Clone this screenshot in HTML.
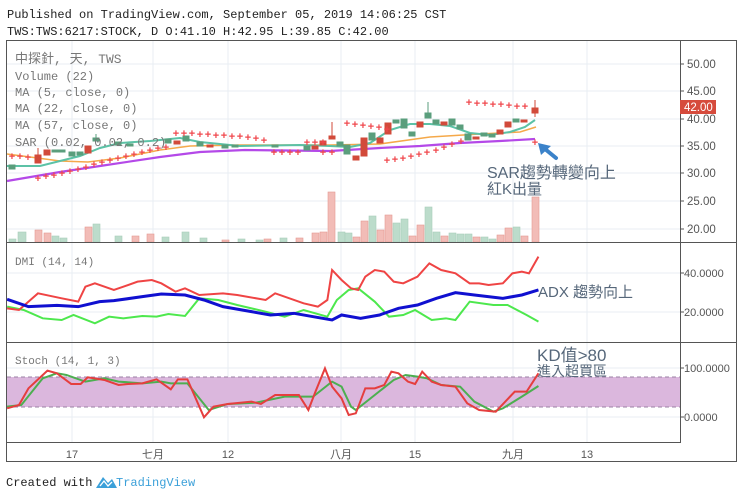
<!DOCTYPE html>
<html><head><meta charset="utf-8"><style>
html,body{margin:0;padding:0;background:#fff;width:740px;height:497px;overflow:hidden}
svg{display:block}
.m{font-family:"Liberation Mono","Noto Sans CJK TC",monospace}
.s{font-family:"Liberation Sans","Noto Sans CJK TC",sans-serif}
</style></head><body>
<svg width="740" height="497" viewBox="0 0 740 497" xmlns="http://www.w3.org/2000/svg">
<text class="m" x="7" y="18" font-size="12" fill="#222">Published on TradingView.com, September 05, 2019 14:06:25 CST</text>
<text class="m" x="7" y="35" font-size="12" fill="#222">TWS:TWS:6217:STOCK, D O:41.10 H:42.95 L:39.85 C:42.00</text>

<g stroke="#e9eef3" stroke-width="1">
<line x1="72" y1="41" x2="72" y2="442"/><line x1="153" y1="41" x2="153" y2="442"/><line x1="228" y1="41" x2="228" y2="442"/><line x1="341" y1="41" x2="341" y2="442"/><line x1="415" y1="41" x2="415" y2="442"/><line x1="513" y1="41" x2="513" y2="442"/><line x1="587" y1="41" x2="587" y2="442"/>
<line x1="7" y1="64" x2="680" y2="64"/><line x1="7" y1="91" x2="680" y2="91"/><line x1="7" y1="119" x2="680" y2="119"/><line x1="7" y1="146" x2="680" y2="146"/><line x1="7" y1="173" x2="680" y2="173"/><line x1="7" y1="201" x2="680" y2="201"/><line x1="7" y1="229" x2="680" y2="229"/>
<line x1="7" y1="273" x2="680" y2="273"/><line x1="7" y1="312" x2="680" y2="312"/>
<line x1="7" y1="368" x2="680" y2="368"/><line x1="7" y1="417" x2="680" y2="417"/>
</g>

<g fill="#bcdccb" stroke="#a9cdb9" stroke-width="0.6">
<rect x="9" y="239" width="7" height="3"/><rect x="18" y="232" width="8" height="10"/><rect x="52" y="236" width="7" height="6"/><rect x="60" y="238" width="7" height="4"/><rect x="93" y="224" width="7" height="18"/><rect x="115" y="236" width="7" height="6"/><rect x="162" y="237" width="7" height="5"/><rect x="182" y="232" width="7" height="10"/><rect x="200" y="238" width="7" height="4"/>
<rect x="238" y="239" width="7" height="3"/><rect x="256" y="240" width="7" height="2"/><rect x="280" y="238" width="7" height="4"/>
<rect x="338" y="232" width="7" height="10"/><rect x="345" y="233" width="7" height="9"/><rect x="369" y="216" width="7" height="26"/><rect x="393" y="223" width="7" height="19"/><rect x="401" y="219" width="7" height="23"/><rect x="425" y="207" width="7" height="35"/><rect x="433" y="232" width="7" height="10"/><rect x="449" y="233" width="7" height="9"/><rect x="457" y="234" width="7" height="8"/><rect x="465" y="234" width="7" height="8"/><rect x="481" y="237" width="7" height="5"/><rect x="489" y="239" width="7" height="3"/><rect x="513" y="227" width="7" height="15"/>
</g>
<g fill="#f2bcb7" stroke="#e49a93" stroke-width="0.6">
<rect x="35" y="230" width="7" height="12"/><rect x="44" y="233" width="7" height="9"/><rect x="85" y="227" width="7" height="15"/><rect x="132" y="236" width="7" height="6"/><rect x="147" y="234" width="7" height="8"/><rect x="222" y="240" width="7" height="2"/>
<rect x="264" y="239" width="7" height="3"/><rect x="296" y="238" width="7" height="4"/>
<rect x="312" y="233" width="7" height="9"/><rect x="320" y="232" width="7" height="10"/><rect x="328" y="192" width="7" height="50"/><rect x="353" y="237" width="7" height="5"/><rect x="361" y="221" width="7" height="21"/><rect x="377" y="230" width="7" height="12"/><rect x="385" y="215" width="7" height="27"/><rect x="409" y="236" width="7" height="6"/><rect x="417" y="225" width="7" height="17"/><rect x="441" y="236" width="7" height="6"/><rect x="473" y="237" width="7" height="5"/><rect x="497" y="235" width="7" height="7"/><rect x="505" y="228" width="7" height="14"/><rect x="521" y="236" width="7" height="6"/><rect x="532" y="197" width="7" height="45"/>
</g>

<polyline fill="none" stroke="#b449e8" stroke-width="2.2" points="7,181 60,172 100,166 160,157 200,152 245,150 330,151 380,148 420,146 460,143 500,141 535,139"/>
<polyline fill="none" stroke="#f5a94a" stroke-width="1.6" points="7,154 30,157 60,161 88,162 120,158 160,150 190,146 240,145 330,145 380,144 430,137 480,134 520,132 536,127"/>
<polyline fill="none" stroke="#5cc2a6" stroke-width="2" points="7,166 40,166 80,156 100,148 120,143 150,141 180,138 200,142 240,146 300,145 330,146 350,147 370,143 390,130 410,124 430,124 450,126 470,133 490,135 510,132 525,127 535,120"/>

<g stroke-width="1">
<g fill="#5a9e7c" stroke="#5a9e7c">
<rect x="9" y="165" width="6" height="4"/><rect x="52" y="150" width="6" height="2"/><rect x="59" y="150" width="6" height="2"/><rect x="69" y="152" width="6" height="4"/><rect x="77" y="152" width="6" height="3"/><line x1="96" y1="134" x2="96" y2="141"/><rect x="93" y="138" width="6" height="3"/><rect x="115" y="142" width="6" height="3"/><rect x="127" y="144" width="6" height="2"/><rect x="165" y="139" width="6" height="4"/><rect x="183" y="136" width="6" height="5"/><rect x="197" y="142" width="6" height="4"/><rect x="222" y="145" width="6" height="3"/><rect x="232" y="145" width="6" height="2"/><rect x="272" y="145" width="6" height="2"/>
<rect x="304" y="146" width="6" height="4"/><rect x="337" y="142" width="6" height="4"/><rect x="344" y="145" width="6" height="9"/><rect x="369" y="133" width="6" height="7"/><rect x="393" y="120" width="6" height="3"/><rect x="401" y="119" width="6" height="9"/><rect x="409" y="132" width="6" height="4"/><line x1="428" y1="102" x2="428" y2="118"/><rect x="425" y="113" width="6" height="5"/><rect x="433" y="120" width="6" height="4"/><rect x="449" y="119" width="6" height="6"/><rect x="457" y="125" width="6" height="4"/><rect x="465" y="134" width="6" height="6"/><rect x="481" y="133" width="6" height="3"/><rect x="489" y="134" width="6" height="3"/><rect x="513" y="119" width="6" height="3"/>
</g>
<g fill="#d24a3a" stroke="#d24a3a">
<line x1="38" y1="148" x2="38" y2="163"/><rect x="35" y="155" width="6" height="8"/><rect x="44" y="150" width="6" height="5"/><rect x="85" y="146" width="6" height="7"/><rect x="174" y="141" width="6" height="3"/><rect x="207" y="145" width="6" height="2"/>
<rect x="312" y="146" width="6" height="3"/><rect x="320" y="141" width="6" height="4"/><line x1="332" y1="122" x2="332" y2="139"/><rect x="329" y="136" width="6" height="3"/><rect x="353" y="156" width="6" height="4"/><rect x="361" y="138" width="6" height="18"/><rect x="377" y="138" width="6" height="5"/><rect x="385" y="123" width="6" height="11"/><rect x="417" y="122" width="6" height="5"/><rect x="441" y="122" width="6" height="3"/><rect x="473" y="137" width="6" height="2"/><rect x="497" y="130" width="6" height="4"/><rect x="505" y="122" width="6" height="5"/><rect x="521" y="120" width="6" height="2"/><line x1="535" y1="100" x2="535" y2="117"/><rect x="532" y="108" width="6" height="5"/>
</g>
</g>

<g fill="#f0474c" font-family="Liberation Sans" font-size="11" font-weight="bold" text-anchor="middle">
<text x="12" y="160">+</text><text x="20" y="160">+</text><text x="28" y="161">+</text>
<text x="38" y="182">+</text><text x="46" y="180">+</text><text x="54" y="179">+</text><text x="62" y="177">+</text><text x="70" y="175">+</text><text x="78" y="173">+</text><text x="86" y="171">+</text><text x="94" y="168">+</text><text x="102" y="166">+</text><text x="110" y="164">+</text><text x="118" y="162">+</text><text x="126" y="160">+</text><text x="134" y="158">+</text><text x="142" y="156">+</text><text x="150" y="154">+</text><text x="158" y="152">+</text><text x="166" y="151">+</text>
<text x="176" y="137">+</text><text x="184" y="137">+</text><text x="192" y="137">+</text><text x="200" y="138">+</text><text x="208" y="138">+</text><text x="216" y="139">+</text><text x="224" y="139">+</text><text x="232" y="140">+</text><text x="240" y="140">+</text><text x="248" y="141">+</text><text x="256" y="142">+</text><text x="264" y="144">+</text>
<text x="274" y="156">+</text><text x="282" y="156">+</text><text x="290" y="156">+</text><text x="298" y="156">+</text>
<text x="307" y="146">+</text><text x="315" y="146">+</text><text x="323" y="146">+</text>
<text x="323" y="156">+</text><text x="332" y="156">+</text>
<text x="347" y="127">+</text><text x="355" y="128">+</text><text x="363" y="129">+</text><text x="371" y="130">+</text><text x="379" y="131">+</text><text x="387" y="133">+</text>
<text x="387" y="164">+</text><text x="395" y="163">+</text><text x="403" y="162">+</text><text x="411" y="160">+</text><text x="419" y="158">+</text><text x="427" y="156">+</text><text x="436" y="154">+</text><text x="444" y="151">+</text><text x="452" y="148">+</text><text x="461" y="145">+</text>
<text x="469" y="106">+</text><text x="477" y="107">+</text><text x="485" y="107">+</text><text x="493" y="108">+</text><text x="501" y="108">+</text><text x="509" y="109">+</text><text x="517" y="110">+</text><text x="525" y="110">+</text>
<text x="535" y="146">+</text>
</g>

<g class="m" fill="#777" font-size="12">
<text x="15" y="63" font-size="13">中探針, 天, TWS</text>
<text x="15" y="80">Volume (22)</text>
<text x="15" y="96">MA (5, close, 0)</text>
<text x="15" y="112">MA (22, close, 0)</text>
<text x="15" y="129">MA (57, close, 0)</text>
<text x="15" y="146">SAR (0.02, 0.02, 0.2)</text>
<text x="15" y="265" font-size="11">DMI (14, 14)</text>
<text x="15" y="364" font-size="11">Stoch (14, 1, 3)</text>
</g>

<text class="s" x="487" y="178" font-size="16" fill="#56677a">SAR趨勢轉變向上</text>
<text class="s" x="487" y="194" font-size="15" fill="#56677a">紅K出量</text>
<path d="M556,158 L545,149" stroke="#3b82c9" stroke-width="4" stroke-linecap="round"/>
<path d="M538,143 L551,146 L541,155 Z" fill="#3b82c9"/>

<g transform="translate(0,240) scale(0.4744,0.3333)">
<polyline vector-effect="non-scaling-stroke" fill="none" stroke="#4de84d" stroke-width="2" points="15,200 50,210 90,235 130,240 155,225 200,250 230,230 260,235 300,228 330,230 355,222 390,228 420,175 460,180 500,195 560,215 600,230 640,210 690,230 710,180 735,150 755,145 790,185 820,230 850,225 875,210 910,240 940,235 960,240 990,185 1040,195 1070,195 1110,225 1135,245"/>
<polyline vector-effect="non-scaling-stroke" fill="none" stroke="#ef4444" stroke-width="2" points="15,205 40,210 80,160 130,175 165,185 180,140 200,130 240,150 260,140 290,125 320,120 340,130 370,155 390,145 420,165 470,160 500,165 560,180 580,160 640,190 670,200 690,180 700,90 720,120 740,145 755,150 770,110 790,90 810,95 830,125 850,130 880,110 905,70 930,90 960,100 990,130 1010,130 1030,135 1060,130 1080,100 1100,95 1115,100 1135,50"/>
<polyline vector-effect="non-scaling-stroke" fill="none" stroke="#1010d0" stroke-width="3" points="15,178 60,200 120,196 165,200 210,185 240,182 300,170 340,162 390,165 430,180 470,200 530,215 570,225 620,220 680,235 700,240 720,225 760,235 800,225 840,205 880,195 920,175 960,158 1000,165 1060,175 1100,165 1135,150"/>
</g>
<text class="s" x="538" y="297" font-size="15" fill="#56677a">ADX 趨勢向上</text>

<rect x="7" y="377" width="673" height="30" fill="#dbb7dd"/>
<line x1="7" y1="377" x2="680" y2="377" stroke="#9b82a4" stroke-dasharray="4,3"/>
<line x1="7" y1="407" x2="680" y2="407" stroke="#9b82a4" stroke-dasharray="4,3"/>
<g transform="translate(0,240) scale(0.4744,0.3333)">
<polyline vector-effect="non-scaling-stroke" fill="none" stroke="#4caf50" stroke-width="2" points="15,500 45,495 90,415 120,400 140,405 180,425 220,415 250,425 300,430 340,425 360,430 395,430 440,510 480,492 540,488 600,470 640,470 660,470 700,425 720,440 740,500 750,510 790,465 830,420 855,405 880,410 900,415 930,435 970,440 1000,485 1040,515 1060,505 1100,470 1135,438"/>
<polyline vector-effect="non-scaling-stroke" fill="none" stroke="#e53e3e" stroke-width="2" points="15,505 40,495 60,445 100,392 120,400 150,432 170,432 185,412 220,420 250,435 270,432 300,430 330,418 360,448 375,418 395,418 430,532 450,500 480,492 530,485 550,492 580,465 610,465 630,465 650,510 665,455 685,385 700,440 720,475 735,525 750,520 770,445 790,445 810,435 825,395 840,400 860,425 875,432 890,395 910,425 930,435 960,440 985,490 1010,510 1045,515 1085,455 1110,455 1135,400"/>
</g>
<text class="s" x="537" y="361" font-size="17" fill="#56677a">KD值&gt;80</text>
<text class="s" x="537" y="376" font-size="14" fill="#56677a">進入超買區</text>

<g fill="none" stroke="#555" stroke-width="1">
<rect x="6.5" y="40.5" width="730" height="421"/>
<line x1="680.5" y1="41" x2="680.5" y2="442"/>
<line x1="7" y1="242.5" x2="737" y2="242.5"/>
<line x1="7" y1="342.5" x2="737" y2="342.5"/>
<line x1="7" y1="442.5" x2="681" y2="442.5"/>
</g>
<g stroke="#555"><line x1="680" y1="64" x2="684" y2="64"/><line x1="680" y1="91" x2="684" y2="91"/><line x1="680" y1="119" x2="684" y2="119"/><line x1="680" y1="146" x2="684" y2="146"/><line x1="680" y1="173" x2="684" y2="173"/><line x1="680" y1="201" x2="684" y2="201"/><line x1="680" y1="229" x2="684" y2="229"/><line x1="680" y1="273" x2="684" y2="273"/><line x1="680" y1="312" x2="684" y2="312"/><line x1="680" y1="368" x2="684" y2="368"/><line x1="680" y1="417" x2="684" y2="417"/></g>

<g class="s" font-size="11.5" fill="#555">
<text x="687" y="68">50.00</text><text x="687" y="95">45.00</text><text x="687" y="150">35.00</text><text x="687" y="177">30.00</text><text x="687" y="205">25.00</text><text x="687" y="233">20.00</text><text x="687" y="123">40.00</text>
<text x="684" y="277" font-size="11">40.0000</text><text x="684" y="316" font-size="11">20.0000</text>
<text x="684" y="372" font-size="11">100.0000</text><text x="684" y="421" font-size="11">0.0000</text>
</g>
<rect x="680" y="100" width="36" height="14" fill="#d64b3c"/>
<text class="s" x="684" y="111" font-size="11.5" fill="#fff">42.00</text>

<g class="s" font-size="11" fill="#555" text-anchor="middle">
<text x="72" y="458">17</text><text x="153" y="458">七月</text><text x="228" y="458">12</text><text x="341" y="458">八月</text><text x="415" y="458">15</text><text x="513" y="458">九月</text><text x="587" y="458">13</text>
</g>

<text class="m" x="6" y="486" font-size="12" fill="#222">Created with</text>
<path d="M96,488 L103,477 L108,483 L112,479 L117,488 Z" fill="#3ba0d9"/>
<path d="M100,486 L104,481 L108,486 L112,482" fill="none" stroke="#fff" stroke-width="1.3"/>
<text class="m" x="116" y="486" font-size="12" fill="#3ba0d9">TradingView</text>
</svg>
</body></html>
